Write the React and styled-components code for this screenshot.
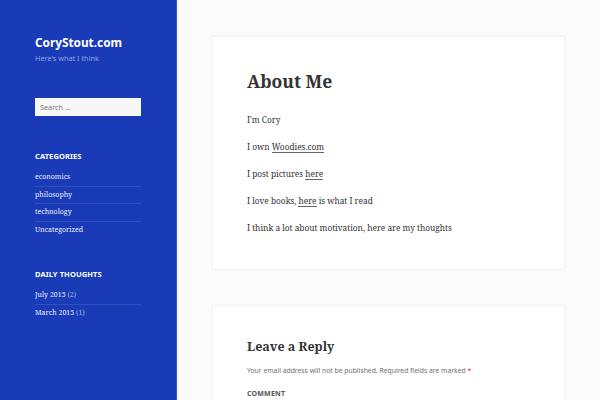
import React from 'react';
import styled, { createGlobalStyle } from 'styled-components';

const GlobalStyle = createGlobalStyle`
  html, body {
    margin: 0;
    padding: 0;
    background: #fbfbfb;
    overflow: hidden;
  }
`;

const Page = styled.div`
  display: flex;
  width: 600px;
  height: 400px;
  overflow: hidden;
`;

const Sidebar = styled.aside`
  width: 176px;
  flex-shrink: 0;
  background: #1a3bb7;
  box-shadow: 1px 0 0 #3b57c4, 2px 0 2px rgba(0, 0, 0, 0.06);
  padding: 33px 35px 0 35px;
  box-sizing: border-box;
  color: #fff;
`;

const SiteTitle = styled.div`
  font-family: 'Noto Sans', sans-serif;
  font-weight: 700;
  font-size: 11.8px;
  line-height: 18px;
  color: #fff;
`;

const Tagline = styled.div`
  font-family: 'Noto Sans', sans-serif;
  font-size: 7.3px;
  line-height: 12px;
  margin-top: 1px;
  color: #8ea2e3;
`;

const SearchBox = styled.div`
  margin-top: 34px;
  height: 18px;
  width: 106px;
  background: #f7f7f7;
  box-sizing: border-box;
  padding: 0 5px;
  display: flex;
  align-items: center;
  font-family: 'Noto Sans', sans-serif;
  font-size: 7.3px;
  color: #777;
`;

const Widget = styled.section`
  margin-top: ${(p) => p.top}px;
  width: 106px;
`;

const WidgetTitle = styled.h2`
  margin: 0 0 7px;
  font-family: 'Noto Sans', sans-serif;
  font-weight: 700;
  font-size: 7.5px;
  line-height: 12px;
  letter-spacing: 0.1px;
  text-transform: uppercase;
  color: #fff;
`;

const List = styled.ul`
  list-style: none;
  margin: 0;
  padding: 0;
`;

const Item = styled.li`
  font-family: 'Noto Serif', 'DejaVu Serif', serif;
  font-size: 7px;
  line-height: 16.5px;
  color: #e8ecfa;
  border-top: ${(p) => (p.first ? 'none' : '1px solid rgba(255,255,255,0.1)')};
`;

const Count = styled.span`
  color: #a9b7ea;
`;

const Main = styled.main`
  flex: 1;
  padding: 36px 35px 0 36px;
  display: flex;
  flex-direction: column;
  gap: 35px;
`;

const Card = styled.article`
  background: #fff;
  border: 1px solid #f3f3f3;
  box-shadow: 0 0 1px rgba(0, 0, 0, 0.06);
  padding: ${(p) => p.pad};
  min-height: ${(p) => p.minH || 0}px;
  box-sizing: border-box;
`;

const Title = styled.h1`
  margin: 0 0 19px;
  font-family: 'Noto Serif', 'DejaVu Serif', serif;
  font-weight: 700;
  font-size: 17.5px;
  line-height: 24px;
  color: #333;
`;

const Para = styled.p`
  margin: 0 0 11px;
  font-family: 'Noto Serif', 'DejaVu Serif', serif;
  font-size: 8.3px;
  line-height: 16px;
  color: #333;
`;

const TextLink = styled.span`
  border-bottom: 1px solid #666;
`;

const ReplyTitle = styled.h2`
  margin: 0 0 8px;
  font-family: 'Noto Serif', 'DejaVu Serif', serif;
  font-weight: 700;
  font-size: 12.5px;
  line-height: 20px;
  color: #333;
`;

const Note = styled.p`
  margin: 0 0 12px;
  font-family: 'Noto Sans', sans-serif;
  font-size: 6.8px;
  line-height: 12px;
  color: #707070;
`;

const Req = styled.span`
  color: #c0392b;
`;

const Label = styled.div`
  font-family: 'Noto Sans', sans-serif;
  font-weight: 700;
  font-size: 7px;
  letter-spacing: 0.2px;
  text-transform: uppercase;
  color: #555;
`;

const categories = ['economics', 'philosophy', 'technology', 'Uncategorized'];
const archives = [
  ['July 2015', 2],
  ['March 2015', 1],
];

export default function App() {
  return (
    <>
      <GlobalStyle />
      <Page>
        <Sidebar>
          <SiteTitle>CoryStout.com</SiteTitle>
          <Tagline>Here's what I think</Tagline>
          <SearchBox>Search …</SearchBox>

          <Widget top={34}>
            <WidgetTitle>Categories</WidgetTitle>
            <List>
              {categories.map((c, i) => (
                <Item key={c} first={i === 0}>{c}</Item>
              ))}
            </List>
          </Widget>

          <Widget top={30}>
            <WidgetTitle>Daily Thoughts</WidgetTitle>
            <List>
              {archives.map(([m, n], i) => (
                <Item key={m} first={i === 0}>
                  {m} <Count>({n})</Count>
                </Item>
              ))}
            </List>
          </Widget>
        </Sidebar>

        <Main>
          <Card pad="32px 35px 23px 34px" minH={234}>
            <Title>About Me</Title>
            <Para>I'm Cory</Para>
            <Para>
              I own <TextLink>Woodies.com</TextLink>
            </Para>
            <Para>
              I post pictures <TextLink>here</TextLink>
            </Para>
            <Para>
              I love books, <TextLink>here</TextLink> is what I read
            </Para>
            <Para>I think a lot about motivation, here are my thoughts</Para>
          </Card>

          <Card pad="31px 35px 30px 34px" minH={140}>
            <ReplyTitle>Leave a Reply</ReplyTitle>
            <Note>
              Your email address will not be published. Required fields are marked <Req>*</Req>
            </Note>
            <Label>Comment</Label>
          </Card>
        </Main>
      </Page>
    </>
  );
}
